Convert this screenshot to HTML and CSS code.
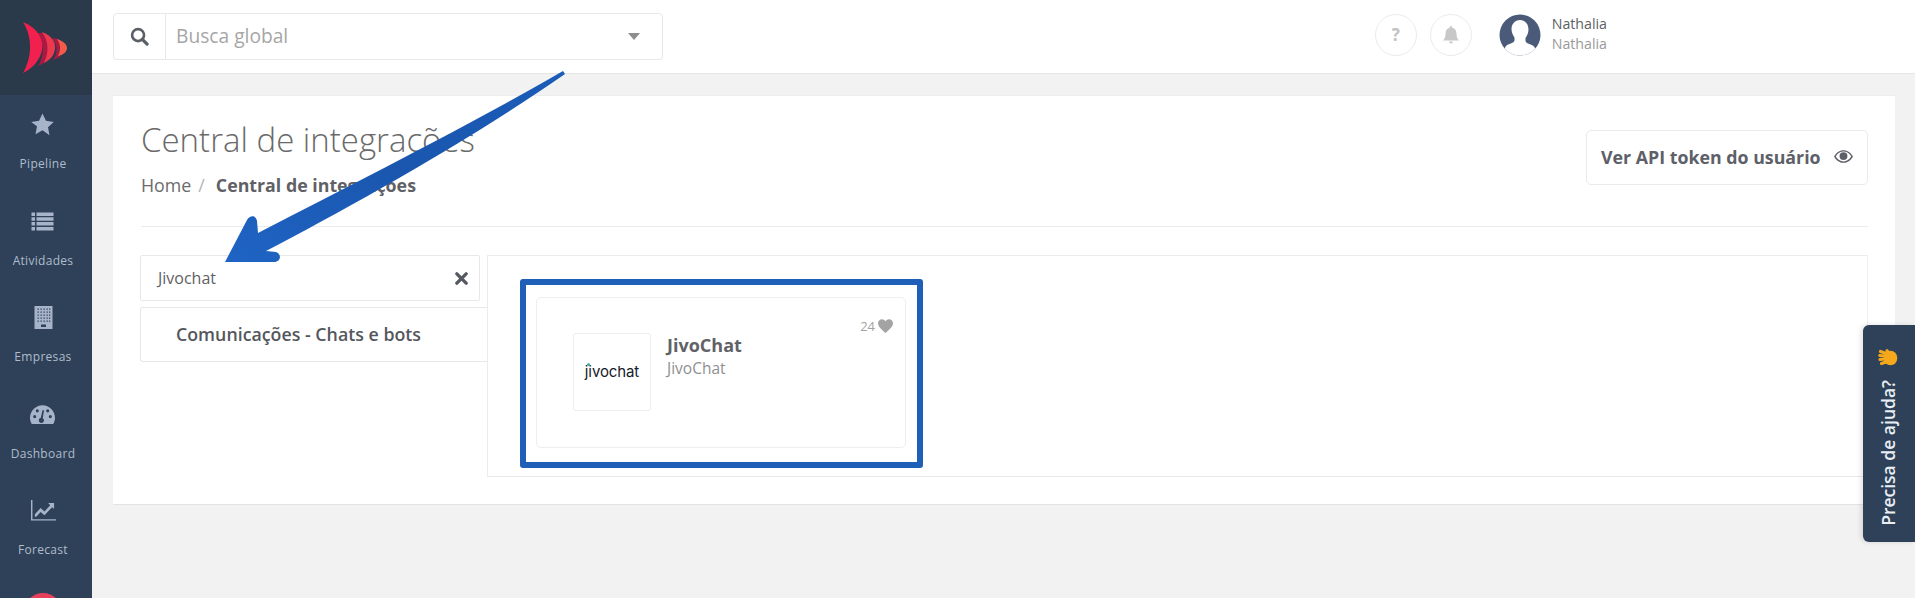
FILE: index.html
```html
<!DOCTYPE html>
<html lang="pt-BR">
<head>
<meta charset="utf-8">
<title>Central de integrações</title>
<link rel="stylesheet" href="styles.css">
</head>
<body>
<div class="app">
  <aside class="sidebar">
    <div class="brand">
      <svg class="brand-logo" viewBox="0 0 92 95" width="92" height="95">
        <path fill="#a91a42" d="M37 33 C44 40 45 56 38 66 L46 62 C50 52 49 42 44 33Z"/>
        <path fill="#a91a42" d="M52 38 C58 44 58 54 53 60 L60 57 C62 50 61 44 58 39Z"/>
        <path fill="#f2204f" d="M23 22 C38 28 44 40 42 50 C40 60 33 68 23 73 C32 58 33 38 23 22Z"/>
        <path fill="#ee3850" d="M42 32 C52 36 56 42 55 49 C54 56 50 60 44 63 C49 52 49 42 42 32Z"/>
        <path fill="#f25a4a" d="M57 39 C63 41 67 44 67 48 C67 52 63 55 58 56 C61 50 61 45 57 39Z"/>
      </svg>
    </div>
    <nav class="nav">
      <a class="nav-item">
        <svg class="nav-icon" viewBox="0 0 24 24"><path d="M12 1.500l3.300 7 7.500 1-5.500 5.200 1.400 7.600L12 17.600l-6.700 3.700 1.400-7.600L1.200 9.500l7.500-1z"/></svg>
        <span>Pipeline</span>
      </a>
      <a class="nav-item">
        <svg class="nav-icon" viewBox="0 0 25 25"><path d="M1.500 3.500h3.500v3.500H1.500zM6.500 3.500h17v3.500h-17zM1.500 8.300h3.500v3.500H1.500zM6.500 8.300h17v3.500h-17zM1.500 13.100h3.500v3.500H1.500zM6.500 13.100h17v3.500h-17zM1.500 17.900h3.500v3.500H1.500zM6.500 17.900h17v3.500h-17z"/></svg>
        <span>Atividades</span>
      </a>
      <a class="nav-item">
        <svg class="nav-icon" viewBox="0 0 25 25"><path fill-rule="evenodd" d="M3.500 1h18v23h-18zM6.500 3.500v1.300h1.300V3.500zM9.500 3.500v1.300h1.300V3.500zM12.500 3.500v1.300h1.300V3.500zM15.500 3.500v1.300h1.300V3.500zM18 3.500v1.300h1.300V3.500zM6.500 6.500v1.300h1.300V6.500zM9.500 6.500v1.300h1.300V6.500zM12.500 6.500v1.300h1.300V6.500zM15.500 6.500v1.300h1.300V6.500zM18 6.500v1.300h1.300V6.500zM6.500 9.500v1.300h1.300V9.500zM9.500 9.500v1.300h1.300V9.500zM12.500 9.500v1.300h1.300V9.500zM15.500 9.500v1.300h1.300V9.500zM18 9.500v1.300h1.300V9.500zM6.500 12.500v1.300h1.300v-1.300zM9.500 12.500v1.300h1.300v-1.300zM12.500 12.500v1.300h1.300v-1.300zM15.500 12.500v1.300h1.300v-1.300zM18 12.500v1.300h1.300v-1.300zM6.500 15.500v1.300h1.300v-1.300zM9.500 15.500v1.300h1.300v-1.300zM12.500 15.500v1.300h1.300v-1.300zM15.500 15.500v1.300h1.300v-1.300zM18 15.500v1.300h1.300v-1.300zM10 19.500v2.500h5v-2.500z"/></svg>
        <span>Empresas</span>
      </a>
      <a class="nav-item">
        <svg class="nav-icon" viewBox="0 0 24 24"><path fill-rule="evenodd" d="M12 3C5.500 3 0 8.500 0 15c0 2.300.6 4.300 1.700 6h20.600c1.100-1.700 1.700-3.700 1.700-6 0-6.500-5.500-12-12-12zM4.500 15.500a1.500 1.500 0 1 0 0-3 1.500 1.500 0 0 0 0 3zM7 10a1.500 1.500 0 1 0 0-3 1.500 1.500 0 0 0 0 3zM19.500 15.500a1.500 1.500 0 1 0 0-3 1.500 1.500 0 0 0 0 3zM17 10a1.500 1.500 0 1 0 0-3 1.500 1.500 0 0 0 0 3zM13.500 8l-1.300 7.500a2.500 2.500 0 1 1-1.800-.3L12 8z"/></svg>
        <span>Dashboard</span>
      </a>
      <a class="nav-item">
        <svg class="nav-icon" viewBox="0 0 26 22"><path d="M0 0h1.500v20H26v1.500H0z"/><path d="M4 15l6-6.500 4 3.500 6-6.500-2.200-2.200H24v6.200l-2-2-8 8.500-4-3.500-4.500 5H4z"/></svg>
        <span>Forecast</span>
      </a>
      <div class="nav-badge"></div>
    </nav>
  </aside>

  <div class="main">
    <header class="topbar">
      <div class="search">
        <div class="search-icon">
          <svg viewBox="0 0 20 20" width="19" height="19"><circle cx="8.500" cy="8.500" r="6.300" fill="none" stroke="#5b5f66" stroke-width="2.800"/><path d="M13 13l5 5" stroke="#5b5f66" stroke-width="3.400" stroke-linecap="round"/></svg>
        </div>
        <div class="search-field">
          <span>Busca global</span>
          <i class="caret"></i>
        </div>
      </div>
      <div class="top-actions">
        <button class="round-btn">?</button>
        <button class="round-btn">
          <svg viewBox="0 0 20 20" width="20" height="20"><path fill="#c8c8c8" d="M10 1a1.300 1.300 0 0 1 1.200 1.700C14 3.300 15.500 5.500 15.500 8.500c0 4 1 5.500 2.500 7H2c1.500-1.500 2.500-3 2.500-7 0-3 1.500-5.200 4.300-5.800A1.300 1.300 0 0 1 10 1zM8 16.500h4a2 2 0 0 1-4 0z"/></svg>
        </button>
        <svg class="avatar" viewBox="0 0 42 42" width="42" height="42">
          <defs><clipPath id="av"><circle cx="21" cy="21" r="20.500"/></clipPath></defs>
          <circle cx="21" cy="21" r="20.500" fill="#4a5a78"/>
          <g clip-path="url(#av)">
            <path fill="#fff" d="M21 6c5 0 8.500 4 8.500 9.500 0 3.500-1.500 6.500-3 8.500v3c0 1.500 2.500 2.500 5 3.500 2 .8 3.500 1.500 4.500 3.500V42H6v-8.500c1-2 2.500-2.700 4.500-3.500 2.500-1 5-2 5-3.500v-3c-1.500-2-3-5-3-8.500C12.500 10 16 6 21 6z"/>
          </g>
        </svg>
        <div class="user">
          <div class="user-name">Nathalia</div>
          <div class="user-role">Nathalia</div>
        </div>
      </div>
    </header>

    <main class="content">
      <section class="panel">
        <div class="panel-head">
          <div>
            <h1 class="title">Central de integrações</h1>
            <div class="crumbs"><span class="crumb">Home</span><span class="crumb-sep">/</span><strong class="crumb-current">Central de integrações</strong></div>
          </div>
          <button class="token-btn">
            <span>Ver API token do usuário</span>
            <svg viewBox="0 0 24 16" width="19" height="13"><path fill-rule="evenodd" fill="#5d6068" d="M12 0C7 0 2.800 3 0 8c2.800 5 7 8 12 8s9.200-3 12-8c-2.800-5-7-8-12-8zM12 1.800c4 0 7.500 2.300 9.800 6.200-2.300 3.900-5.800 6.200-9.800 6.200S4.500 11.900 2.200 8C4.500 4.100 8 1.800 12 1.800z"/><circle cx="12" cy="7.500" r="5" fill="#5d6068"/></svg>
          </button>
        </div>

        <div class="integrations">
          <div class="categories">
            <div class="filter">
              <span>Jivochat</span>
              <svg viewBox="0 0 14 14" width="13" height="13"><path d="M2 2l10 10M12 2L2 12" stroke="#555a60" stroke-width="3.600" stroke-linecap="round"/></svg>
            </div>
            <div class="category">Comunicações - Chats e bots</div>
          </div>
          <div class="results">
            <article class="card">
              <div class="highlight"></div>
              <div class="likes">24
                <svg viewBox="0 0 24 22" width="15" height="14"><path fill="#a3a3a3" d="M12 22C4 15 0 11 0 6.500 0 3 2.700 0 6.300 0 8.600 0 10.800 1.200 12 3.200 13.200 1.200 15.400 0 17.700 0 21.300 0 24 3 24 6.500 24 11 20 15 12 22z"/></svg>
              </div>
              <div class="logo-box"><span class="logo-word">jivochat</span></div>
              <div class="card-text">
                <div class="card-title">JivoChat</div>
                <div class="card-sub">JivoChat</div>
              </div>
            </article>
          </div>
        </div>
      </section>
    </main>
  </div>

  <aside class="help">
    <svg class="help-hand" viewBox="0 0 20 18" width="20" height="18">
      <g fill="none" stroke="#f5a81c" stroke-width="3.200" stroke-linecap="round">
        <path d="M8 4.500L2.500 2.500"/><path d="M7 7L1.800 6.500"/><path d="M7 10L2 10.500"/><path d="M8 13L3.500 14.500"/><path d="M11 4.500L9 1.800"/>
      </g>
      <ellipse cx="12.500" cy="9" rx="6.800" ry="7.300" fill="#f5a81c"/>
    </svg>
    <span class="help-text">Precisa de ajuda?</span>
  </aside>

  <svg class="arrow" viewBox="0 0 1915 598" width="1915" height="598" aria-hidden="true">
    <defs><linearGradient id="ag" x1="0" y1="1" x2="1" y2="0"><stop offset="0" stop-color="#1f64c4"/><stop offset="0.5" stop-color="#1a56ae"/><stop offset="1" stop-color="#1b5cb8"/></linearGradient></defs>
    <path fill="url(#ag)" d="M565 74 L563 71 C470 125 360 180 258 233 L257 221 C256 215 250 215 247 220 L225 262 L274 262 C281 262 282 254 276 252 L266 251 C350 207 470 140 565 74Z"/>
  </svg>
</div>
</body>
</html>
```

FILE: styles.css
```css
* { box-sizing: border-box; }
html, body { margin: 0; height: 100%; overflow: hidden; }
body { font-family: "Open Sans", "Liberation Sans", sans-serif; color: #5f6166; background: #f2f2f2; }

.app { position: relative; display: flex; width: 1915px; height: 598px; overflow: hidden; }

.sidebar { flex: 0 0 92px; background: #2e4158; overflow: hidden; }
.brand { height: 95px; background: #2a3a4b; }
.brand-logo { display: block; }
.nav { display: flex; flex-direction: column; align-items: center; width: 86px; padding-top: 17px; }
.nav-item { display: flex; flex-direction: column; align-items: center; height: 96.500px; color: #aebccb; font-size: 12px; line-height: 16px; letter-spacing: 0.3px; }
.nav-icon { display: block; width: 25px; height: 25px; margin-bottom: 19px; fill: #a6b3c8; }
.nav-badge { width: 38px; height: 38px; margin-top: -2px; border-radius: 50%; background: #e8405a; flex: none; }

.main { flex: 1; min-width: 0; display: flex; flex-direction: column; }

.topbar { display: flex; align-items: center; height: 74px; padding-left: 21px; background: #fff; border-bottom: 1px solid #e6e6e6; flex: none; }
.search { display: flex; width: 550px; height: 47px; border: 1px solid #e8e8e8; border-radius: 4px; background: #fff; }
.search-icon { display: flex; align-items: center; justify-content: center; width: 52px; border-right: 1px solid #e8e8e8; }
.search-field { flex: 1; display: flex; align-items: center; justify-content: space-between; padding: 0 22px 2px 10px; font-size: 19.200px; color: #a6a6a6; }
.caret { width: 0; height: 0; margin-top: 2px; border-left: 6.500px solid transparent; border-right: 6.500px solid transparent; border-top: 7px solid #8d8d8d; }

.top-actions { display: flex; align-items: center; margin-left: auto; padding: 0 308px 4px 0; }
.round-btn { display: flex; align-items: center; justify-content: center; width: 42px; height: 42px; padding: 0; margin-right: 13px; border: 1px solid #ebebeb; border-radius: 50%; background: #fff; color: #c2c2c2; font: 700 17px "Open Sans", sans-serif; }
.avatar { margin-left: 14px; flex: none; }
.user { margin-left: 11px; padding-bottom: 2px; font-size: 14.200px; line-height: 19.500px; }
.user-name { color: #5d5f63; }
.user-role { color: #9a9a9a; }

.content { flex: 1; padding: 21px 20px 0 21px; }
.panel { height: 410px; padding: 26px 27px 0 28px; background: #fff; border-top: 1px solid #ededed; border-bottom: 1px solid #e3e3e3; }

.panel-head { display: flex; justify-content: space-between; align-items: flex-start; height: 105px; border-bottom: 1px solid #ebebeb; }
.title { margin: 0; font-size: 33px; font-weight: 300; line-height: 36px; color: #6a6a6a; }
.crumbs { display: flex; align-items: center; margin-top: 14px; font-size: 17.800px; line-height: 26px; color: #6b6b6b; }
.crumb-sep { margin: 0 11px 0 7px; color: #b5b5b5; }
.crumb-current { font-weight: 700; color: #5f6166; }
.token-btn { display: flex; align-items: center; justify-content: space-between; width: 282px; height: 55px; margin-top: 8px; padding: 0 14px 2px; border: 1px solid #eaeaea; border-radius: 5px; background: #fff; font: 700 17.800px "Open Sans", sans-serif; color: #5d6068; }

.integrations { display: flex; margin-top: 28px; margin-left: -1px; height: 222px; }
.categories { flex: 0 0 346px; position: relative; z-index: 1; }
.filter { display: flex; align-items: center; justify-content: space-between; width: 340px; height: 46px; padding: 0 11px 0 17px; border: 1px solid #e8e8e8; border-radius: 2px; font-size: 16px; color: #5f6166; }
.category { width: 347px; height: 55px; margin-top: 6px; padding-left: 35px; border: 1px solid #e8e8e8; border-right: 0; border-radius: 3px 0 0 3px; background: #fff; font-size: 17.800px; font-weight: 600; line-height: 52px; color: #55575c; }
.results { flex: 1; padding: 41px 0 0 48px; border: 1px solid #ececec; border-bottom-color: #e8e8e8; border-right-color: #efefef; }

.card { position: relative; display: flex; align-items: flex-start; width: 370px; height: 151px; padding: 35px 0 0 36px; border: 1px solid #eeeeee; border-radius: 5px; background: #fff; }
.highlight { position: absolute; top: -19px; right: -18px; bottom: -21px; left: -17px; border: 6px solid #1f5fb8; border-radius: 3px; pointer-events: none; }
.likes { position: absolute; top: 19px; right: 12px; display: flex; align-items: center; gap: 3px; font-size: 13px; line-height: 18px; color: #a3a3a3; }
.logo-box { display: flex; align-items: center; justify-content: center; width: 78px; height: 78px; padding-bottom: 2px; border: 1px solid #eeeeee; border-radius: 3px; font-family: Inter, "Open Sans", sans-serif; font-size: 15px; font-weight: 400; color: #16202a; letter-spacing: -0.1px; }
.logo-word { position: relative; }
.logo-word::before { content: ""; position: absolute; top: 1px; left: 2px; width: 3px; height: 3px; border-radius: 50%; background: #3fb59e; }
.card-text { margin-left: 16px; }
.card-title { font-size: 18px; font-weight: 700; line-height: 24px; color: #606266; }
.card-sub { font-size: 15.500px; line-height: 22px; color: #8f8f8f; }

.help { position: absolute; top: 325px; right: 0; display: flex; flex-direction: column; align-items: center; gap: 13px; width: 52px; height: 217px; padding: 24px 2px 0 0; border-radius: 6px 0 0 6px; background: #2e4158; box-shadow: -2px 0 5px rgba(0,0,0,.12); }
.help-text { writing-mode: vertical-rl; transform: rotate(180deg); font-size: 17.500px; font-weight: 600; line-height: 24px; color: #e9eef3; white-space: nowrap; }
.help-hand { flex: none; }

.arrow { position: absolute; top: 0; left: 0; z-index: 5; pointer-events: none; }
```
